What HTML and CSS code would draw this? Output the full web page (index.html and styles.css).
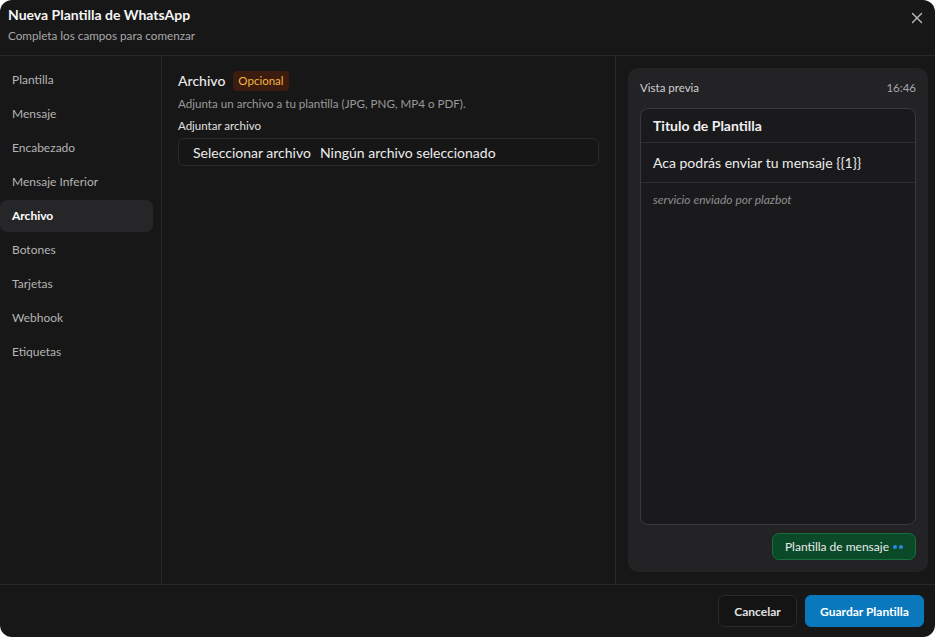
FILE: index.html
```html
<!DOCTYPE html>
<html lang="es">
<head>
<meta charset="utf-8">
<title>Nueva Plantilla de WhatsApp</title>
<link rel="stylesheet" href="styles.css">
</head>
<body>
<div class="modal">
  <header class="modal-header">
    <div class="titles">
      <h1 class="title">Nueva Plantilla de WhatsApp</h1>
      <p class="subtitle">Completa los campos para comenzar</p>
    </div>
    <button class="close" aria-label="Cerrar">
      <svg width="12" height="12" viewBox="0 0 12 12"><path d="M1.5 1.5L10.5 10.5M10.5 1.5L1.5 10.5" stroke="#bdbdbd" stroke-width="1.4" stroke-linecap="round"/></svg>
    </button>
  </header>
  <div class="modal-body">
    <nav class="sidebar">
      <a class="nav-item">Plantilla</a>
      <a class="nav-item">Mensaje</a>
      <a class="nav-item">Encabezado</a>
      <a class="nav-item">Mensaje Inferior</a>
      <a class="nav-item active">Archivo</a>
      <a class="nav-item">Botones</a>
      <a class="nav-item">Tarjetas</a>
      <a class="nav-item">Webhook</a>
      <a class="nav-item">Etiquetas</a>
    </nav>
    <main class="content">
      <div class="section-head">
        <span class="section-title">Archivo</span>
        <span class="badge">Opcional</span>
      </div>
      <p class="section-desc">Adjunta un archivo a tu plantilla (JPG, PNG, MP4 o PDF).</p>
      <label class="field-label">Adjuntar archivo</label>
      <div class="file-input">
        <span class="file-btn">Seleccionar archivo</span>
        <span class="file-name">Ningún archivo seleccionado</span>
      </div>
    </main>
    <aside class="preview-col">
      <div class="preview">
        <div class="preview-head">
          <span>Vista previa</span>
          <span>16:46</span>
        </div>
        <div class="msg-card">
          <div class="msg-title">Titulo de Plantilla</div>
          <div class="msg-body">Aca podrás enviar tu mensaje {{1}}</div>
          <div class="msg-footer">servicio enviado por plazbot</div>
        </div>
        <div class="preview-actions">
          <span class="tpl-pill">Plantilla de mensaje <span class="dots"><i></i><i></i></span></span>
        </div>
      </div>
    </aside>
  </div>
  <footer class="modal-footer">
    <button class="btn btn-secondary">Cancelar</button>
    <button class="btn btn-primary">Guardar Plantilla</button>
  </footer>
</div>
</body>
</html>
```
FILE: styles.css
```css
* { box-sizing: border-box; }
html, body { margin: 0; padding: 0; background: #ffffff; }
body {
  font-family: "Lato", "Noto Sans", sans-serif;
  color: #e8e8e8;
  width: 935px;
  height: 637px;
}
.modal {
  width: 935px;
  height: 637px;
  background: #171717;
  border-radius: 12px;
  display: flex;
  flex-direction: column;
  overflow: hidden;
}
.modal-header {
  height: 56px;
  border-bottom: 1px solid #2a2a2a;
  display: flex;
  justify-content: space-between;
  align-items: flex-start;
  padding: 6px 12px 0 8px;
  flex-shrink: 0;
}
.title {
  margin: 0;
  font-size: 14px;
  font-weight: 700;
  color: #f5f5f5;
  line-height: 18px;
}
.subtitle {
  margin: 3px 0 0;
  font-size: 11.7px;
  color: #a8a8a8;
  line-height: 16px;
}
.close {
  background: none;
  border: 0;
  padding: 0;
  margin-top: 6px;
  width: 12px;
  height: 12px;
  display: flex;
}
.modal-body {
  flex: 1;
  display: flex;
  min-height: 0;
}
.sidebar {
  width: 162px;
  border-right: 1px solid #2a2a2a;
  padding: 8px 8px 0 0;
  display: flex;
  flex-direction: column;
  gap: 2px;
  flex-shrink: 0;
}
.nav-item {
  height: 32px;
  display: flex;
  align-items: center;
  padding-left: 12px;
  padding-bottom: 2px;
  font-size: 12px;
  color: #b4b4b4;
  border-radius: 0 7px 7px 0;
}
.nav-item.active {
  background: #262628;
  color: #ffffff;
  font-weight: 700;
  border-radius: 7px;
}
.content {
  width: 454px;
  border-right: 1px solid #2a2a2a;
  padding: 15px 16px 0 16px;
  flex-shrink: 0;
}
.section-head {
  display: flex;
  align-items: center;
  gap: 8px;
  height: 20px;
}
.section-title {
  font-size: 14px;
  font-weight: 500;
  color: #ececec;
  margin-top: -2px;
}
.badge {
  background: #3b1c0f;
  color: #f6b443;
  font-size: 11.5px;
  padding: 0 5px;
  height: 20px;
  line-height: 20px;
  border-radius: 4px;
}
.section-desc {
  margin: 5px 0 0;
  font-size: 11.6px;
  color: #9a9a9a;
  line-height: 16px;
}
.field-label {
  display: block;
  margin-top: 6px;
  font-size: 11.5px;
  color: #e0e0e0;
  line-height: 16px;
}
.file-input {
  margin-top: 4px;
  height: 28px;
  border: 1px solid #2a2a2a;
  border-radius: 6px;
  display: flex;
  align-items: center;
  padding-left: 14px;
  gap: 9px;
  font-size: 14px;
  color: #ececec;
  background: #161616;
}
.preview-col {
  flex: 1;
  padding: 12px 7px 12px 12px;
  display: flex;
}
.preview {
  flex: 1;
  background: #232325;
  border-radius: 10px;
  padding: 12px 12px 12px 12px;
  display: flex;
  flex-direction: column;
}
.preview-head {
  display: flex;
  justify-content: space-between;
  font-size: 11.5px;
  color: #d0d0d0;
  line-height: 16px;
}
.preview-head span:last-child { color: #a8a8a8; }
.msg-card {
  margin-top: 12px;
  flex: 1;
  background: #1a1a1c;
  border: 1px solid #3a3a3d;
  border-radius: 8px;
  display: flex;
  flex-direction: column;
}
.msg-title {
  height: 34px;
  display: flex;
  align-items: center;
  padding: 0 12px;
  font-size: 14px;
  font-weight: 700;
  color: #f0f0f0;
  border-bottom: 1px solid #2e2e31;
}
.msg-body {
  height: 40px;
  display: flex;
  align-items: center;
  padding: 0 12px;
  font-size: 14px;
  color: #ececec;
  border-bottom: 1px solid #2e2e31;
}
.msg-footer {
  padding: 9px 12px 0;
  font-size: 12px;
  font-style: italic;
  color: #8e8e8e;
}
.preview-actions {
  display: flex;
  justify-content: flex-end;
  margin-top: 8px;
}
.tpl-pill {
  height: 27px;
  display: inline-flex;
  align-items: center;
  gap: 4px;
  padding: 0 12px;
  background: #0b4a28;
  border: 1px solid #17703c;
  border-radius: 7px;
  font-size: 12px;
  color: #eaeaea;
}
.dots { display: inline-flex; gap: 2px; }
.dots i {
  width: 4px;
  height: 4px;
  border-radius: 50%;
  background: #2b86e8;
  display: block;
}
.modal-footer {
  height: 53px;
  border-top: 1px solid #2a2a2a;
  display: flex;
  justify-content: flex-end;
  align-items: center;
  gap: 8px;
  padding: 0 11px 0 0;
  flex-shrink: 0;
}
.btn {
  height: 32px;
  border-radius: 6px;
  font-family: inherit;
  font-size: 12px;
  font-weight: 700;
  padding: 0;
  white-space: nowrap;
}
.btn-secondary {
  background: #141414;
  border: 1px solid #2a2a2a;
  color: #e0e0e0;
  width: 79px;
}
.btn-primary {
  background: #0a78bc;
  border: 1px solid #0a78bc;
  color: #ffffff;
  width: 119px;
}
```
